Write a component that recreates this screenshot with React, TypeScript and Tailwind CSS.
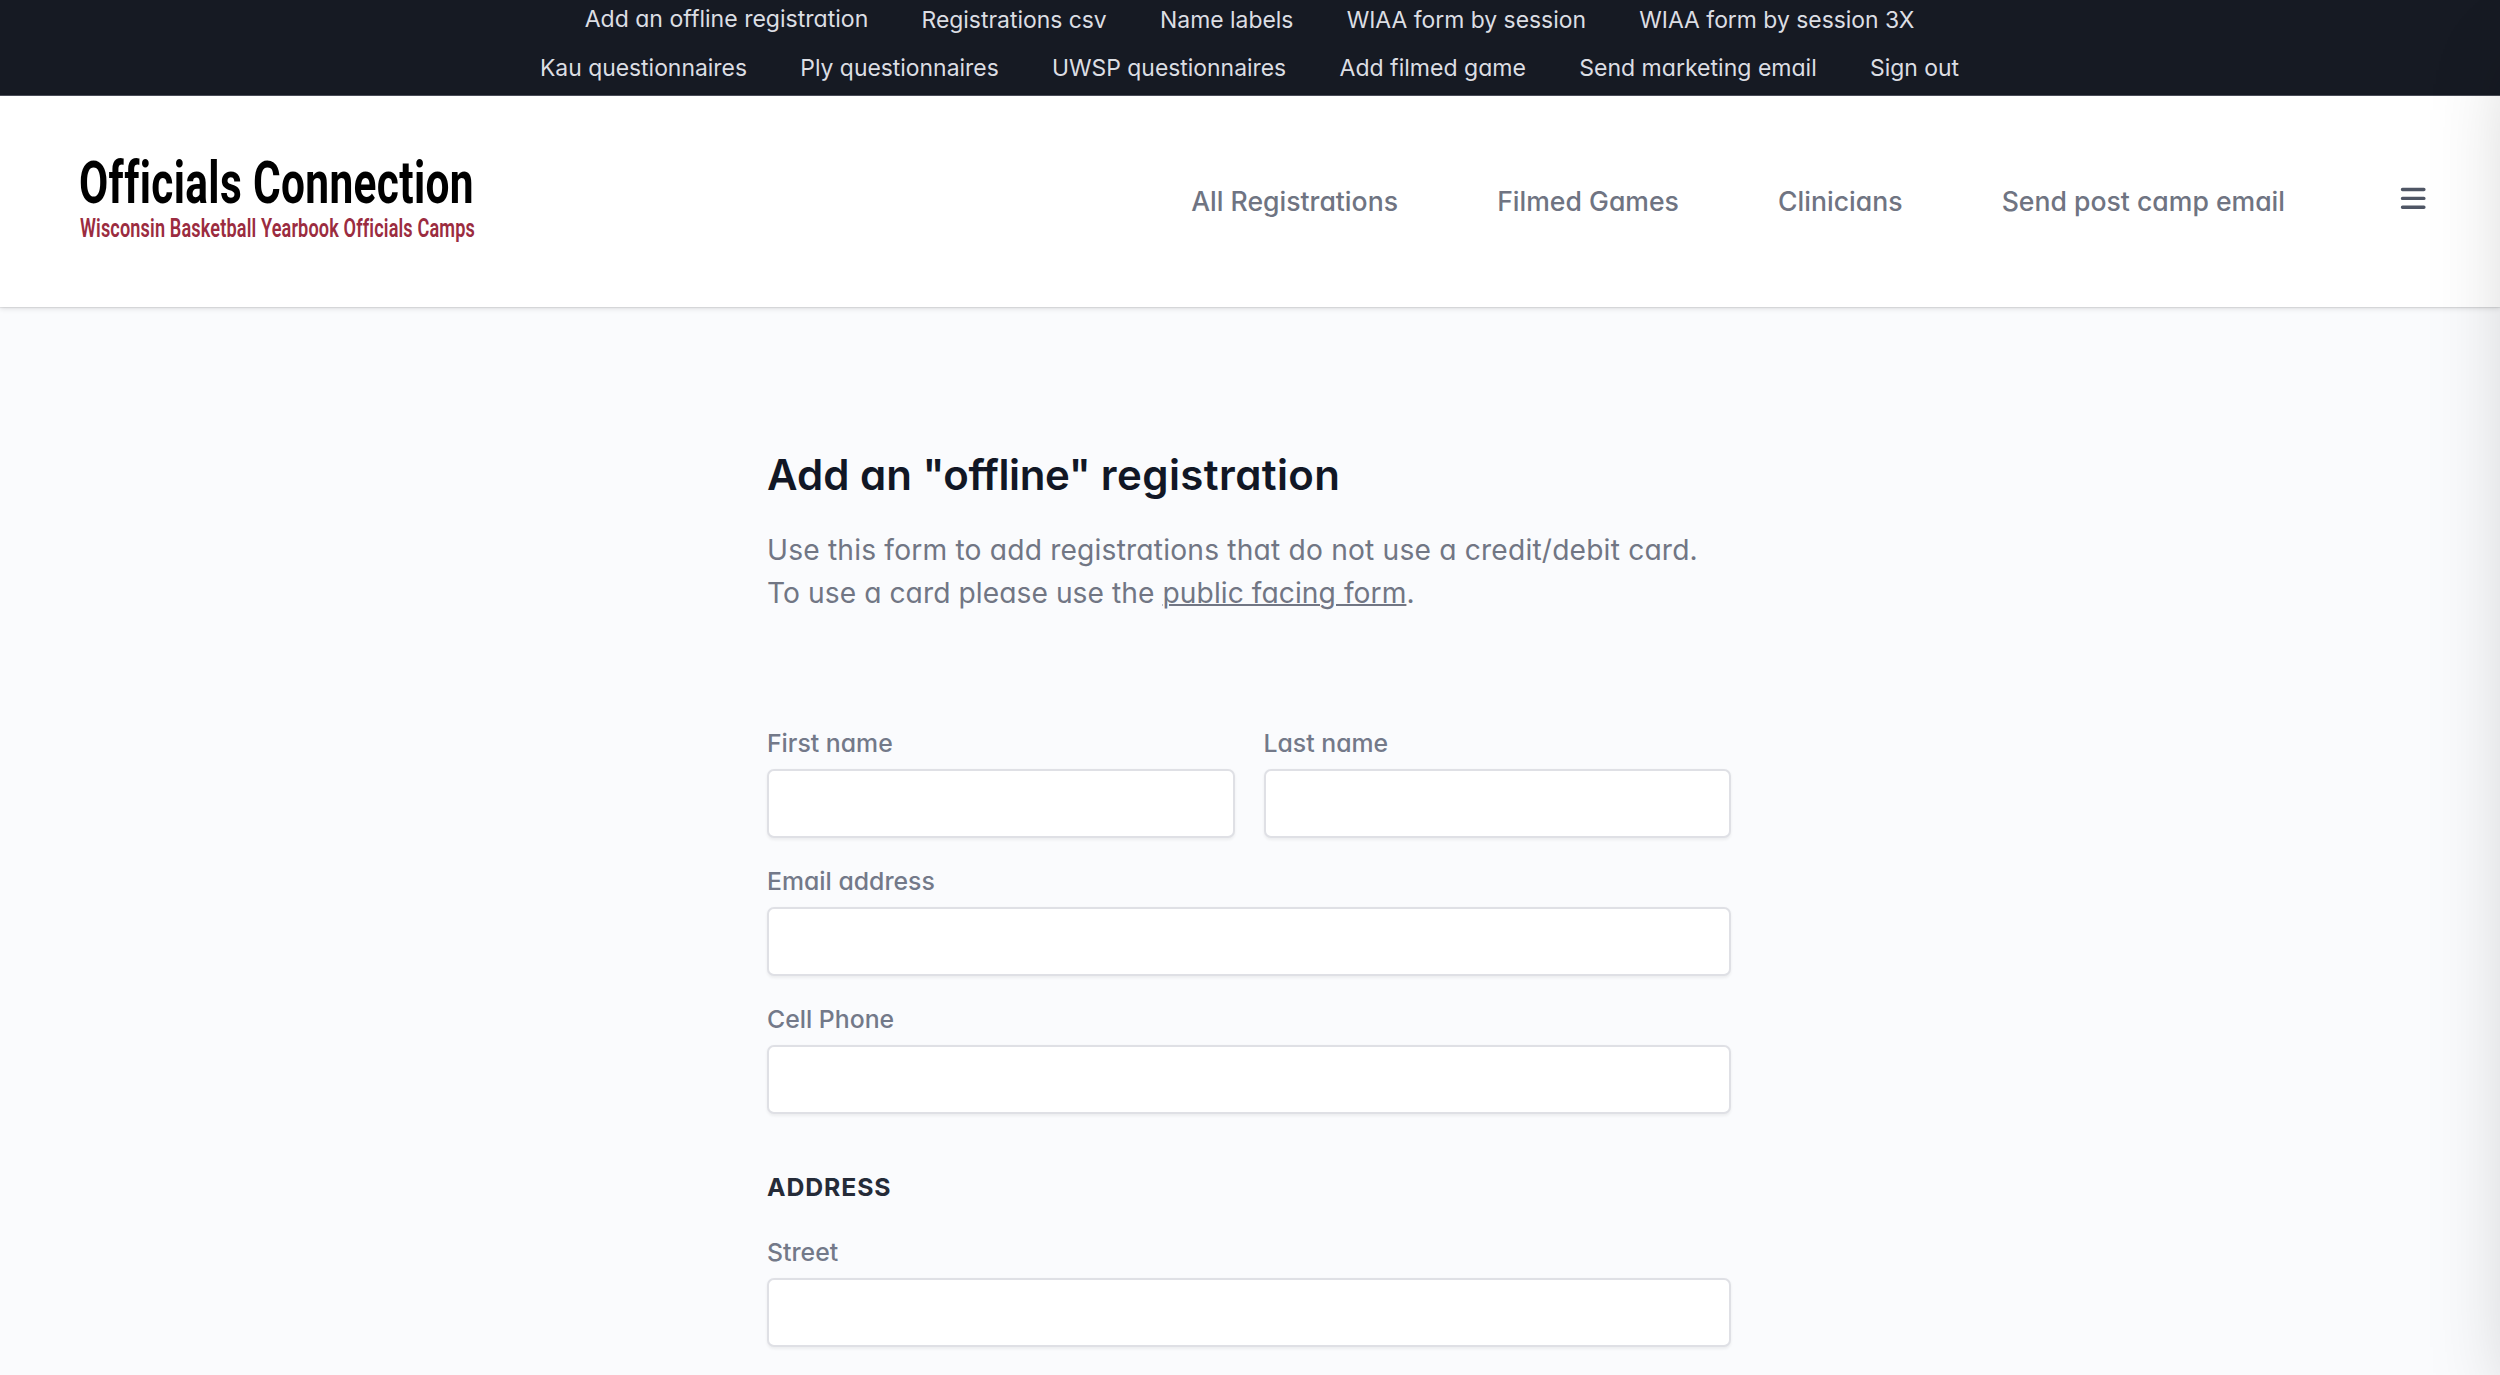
import React from "react";

const adminRows = [
  [
    { label: "Add an offline registration", alt: true },
    { label: "Registrations csv" },
    { label: "Name labels" },
    { label: "WIAA form by session" },
    { label: "WIAA form by session 3X" },
  ],
  [
    { label: "Kau questionnaires" },
    { label: "Ply questionnaires" },
    { label: "UWSP questionnaires" },
    { label: "Add filmed game", alt: true },
    { label: "Send marketing email", alt: true },
    { label: "Sign out" },
  ],
];

const navLinks = ["All Registrations", "Filmed Games", "Clinicians", "Send post camp email"];

function AdminBar() {
  return (
    <div className="h-24 overflow-hidden border-b border-[#4b4e59] bg-[#161a23] text-[22.9px] text-[#dcdee3]">
      <div className="-mt-[4.5px] flex flex-col pr-px">
        {adminRows.map((row, r) => (
          <div key={r} className="flex h-[48.5px] items-center justify-center gap-[53.3px]">
            {row.map(({ label, alt }) => (
              <a
                key={label}
                href="#"
                className={
                  alt ? "whitespace-nowrap text-[23.05px] [font-feature-settings:'cv11']" : "whitespace-nowrap"
                }
              >
                {label}
              </a>
            ))}
          </div>
        ))}
      </div>
    </div>
  );
}

function Logo() {
  return (
    <svg
      width="400"
      height="90"
      viewBox="0 0 400 90"
      className="block overflow-visible [font-variant-ligatures:none]"
      fontFamily="Roboto, sans-serif"
    >
      <text x="-1" y="48" fontSize="59" fontWeight="700" textLength="395" lengthAdjust="spacingAndGlyphs" letterSpacing="0.5" fill="#000">
        Officials Connection
      </text>
      <text x="0" y="81.5" fontSize="25.3" fontWeight="600" textLength="395" lengthAdjust="spacingAndGlyphs" letterSpacing="0.2" fill="#9b2c40">
        Wisconsin Basketball Yearbook Officials Camps
      </text>
    </svg>
  );
}

function Header() {
  return (
    <header className="relative flex h-[211px] items-start bg-white pl-20 pr-[74px] shadow-[0_1px_1px_rgba(0,0,0,0.08),0_2px_5px_rgba(0,0,0,0.1)]">
      <div className="pt-[59px]">
        <Logo />
      </div>
      <nav className="ml-auto mt-[86px] flex h-10 items-center gap-[99.2px] text-[26.6px] font-medium text-[#6f7482] [font-feature-settings:'cv11']">
        {navLinks.map((label) => (
          <a key={label} href="#" className="whitespace-nowrap">
            {label}
          </a>
        ))}
      </nav>
      <button className="ml-[115px] mt-[90px]" aria-label="Menu">
        <svg width="26" height="25" viewBox="0 0 26 25" fill="none" stroke="#4f5665" strokeWidth="3.4" strokeLinecap="round">
          <path d="M2.5 3.5h21.4M2.5 12.4h21.4M2.5 21.3h21.4" />
        </svg>
      </button>
    </header>
  );
}

function Field({ label }: { label: string }) {
  return (
    <label className="block w-full">
      <span className="block h-[41.7px] text-[24.8px] font-medium leading-[33px] text-[#737989]">{label}</span>
      <input className="block h-[69.3px] w-full rounded-[7px] border-2 border-[#dfe0e5] bg-white px-5 shadow-[0_1.5px_3px_rgba(0,0,0,0.06)] outline-none" />
    </label>
  );
}

export default function App() {
  return (
    <div className="relative h-[1375px] w-[2500px] overflow-hidden bg-[#fafbfd] font-['Inter',sans-serif]">
      <AdminBar />
      <Header />
      <main className="ml-[767px] w-[964px] pt-[142px] [font-feature-settings:'cv11']">
        <h1 className="whitespace-nowrap text-[42px] font-semibold leading-[52px] text-[#111725]">
          Add an <span className="tracking-[-0.4px]">"offline"</span> <span className="tracking-[0.4px]">registration</span>
        </h1>
        <p className="mt-[28px] whitespace-nowrap text-[28.2px] leading-[42.7px] tracking-[0.18px] text-[#717684]">
          Use this form to add registrations that do not use a credit/debit card.
          <br />
          <span className="tracking-[0.06px]">
            To use a card please use the{" "}
            <a href="#" className="underline decoration-2">
              public facing form
            </a>
            .
          </span>
        </p>
        <form className="mt-[112.5px] flex flex-col gap-[27.2px]">
          <div className="grid grid-cols-2 gap-[29px]">
            <Field label="First name" />
            <Field label="Last name" />
          </div>
          <Field label="Email address" />
          <Field label="Cell Phone" />
          <h2 className="mb-[5px] mt-[28.5px] text-[24.8px] font-bold leading-[34px] tracking-[0.9px] text-[#252b38]">ADDRESS</h2>
          <Field label="Street" />
        </form>
      </main>
      <div className="absolute left-full top-0 h-full w-96 bg-white shadow-[0_41px_83px_-20px_rgba(0,0,0,0.22)]" />
    </div>
  );
}
